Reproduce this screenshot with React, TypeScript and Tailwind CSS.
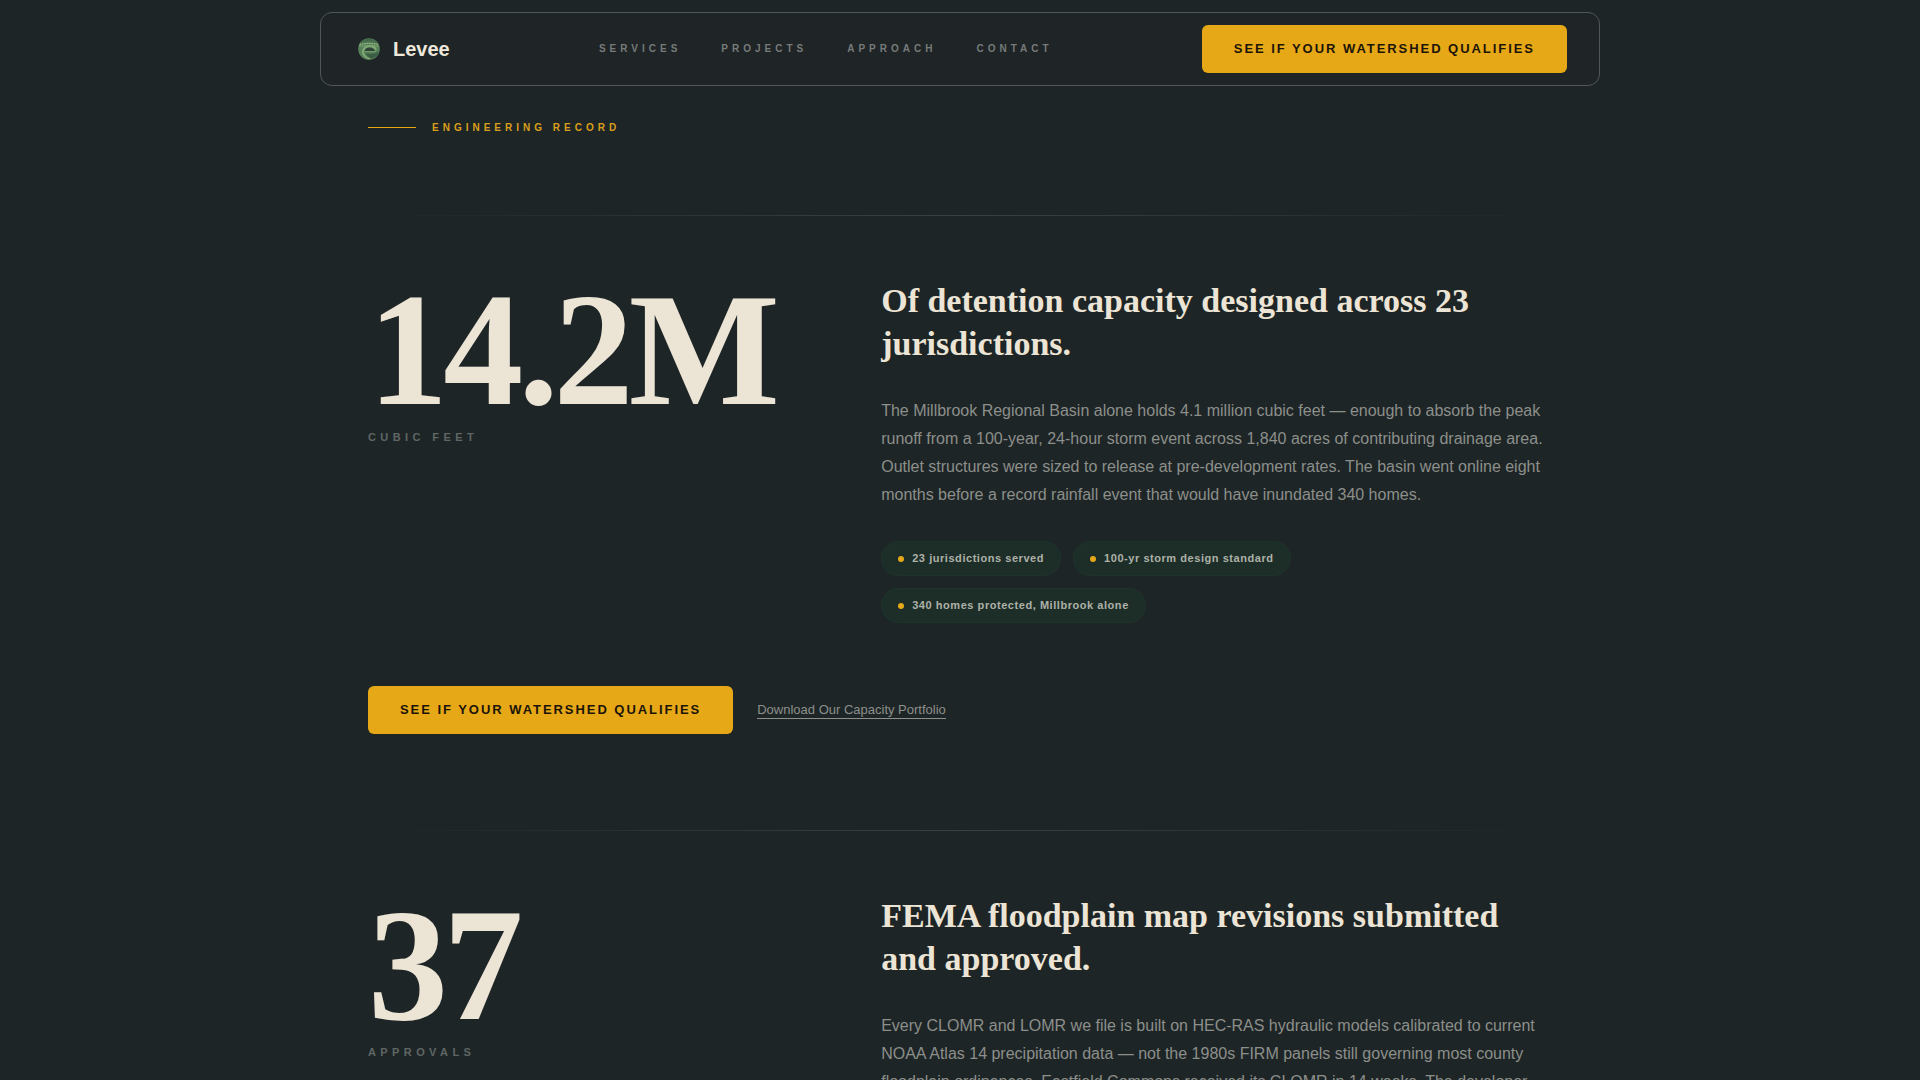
import type { ReactNode } from "react"

interface IRecord {
    value: string,
    unit: string,
    title: string,
    descr: string,
    facts: string[]
}

const navItems = ["Services", "Projects", "Approach", "Contact"]

const records: IRecord[] = [
    {
        value: "14.2M",
        unit: "Cubic feet",
        title: "Of detention capacity designed across 23 jurisdictions.",
        descr: "The Millbrook Regional Basin alone holds 4.1 million cubic feet — enough to absorb the peak runoff from a 100-year, 24-hour storm event across 1,840 acres of contributing drainage area. Outlet structures were sized to release at pre-development rates. The basin went online eight months before a record rainfall event that would have inundated 340 homes.",
        facts: ["23 jurisdictions served", "100-yr storm design standard", "340 homes protected, Millbrook alone"]
    },
    {
        value: "37",
        unit: "Approvals",
        title: "FEMA floodplain map revisions submitted and approved.",
        descr: "Every CLOMR and LOMR we file is built on HEC-RAS hydraulic models calibrated to current NOAA Atlas 14 precipitation data — not the 1980s FIRM panels still governing most county floodplain ordinances. Eastfield Commons received its CLOMR in 14 weeks. The developer",
        facts: []
    }
]

const Logo = () => (
    <svg viewBox="0 0 32 32" className="size-8" aria-hidden="true">
        <circle cx="16" cy="16" r="10.8" fill="#55805a" />
        <path d="M7 10.5a10.8 10.8 0 0 1 18 0c-6-1.6-12-1.6-18 0z" fill="#426848" />
        <path d="M9 9.300c4-1.200 10-1.200 14 0" fill="none" stroke="#5f8760" strokeWidth="0.8" strokeDasharray="1 1" />
        <path d="M6.500 11.500c5-1.400 14-1.400 19 0" fill="none" stroke="#9db789" strokeWidth="1.2" strokeDasharray="1.600 0.800" />
        <path d="M6 13.500c5-1 14-1.200 20 .2" fill="none" stroke="#6f9767" strokeWidth="1.4" />
        <path d="M23 17c-1-3-3.600-4-6.600-3.700-4.400.4-6.800 2.800-6.400 6 .4 3.400 3.400 6 7 6.200" fill="none" stroke="#82a875" strokeWidth="2" />
        <path d="M11.800 18c.4-2.400 2.400-3.400 4.800-3.400 2.600 0 4.600 1.200 5.200 3.400z" fill="#2f4437" />
        <path d="M12 18.500h11" stroke="#7c9f6f" strokeWidth="0.8" />
        <path d="M13 20c3 1.400 8 1 13-1.500-1 4-4 6.500-7.500 7-3-.8-5-2.800-5.500-5.500z" fill="#3b5d43" />
    </svg>
)

const QualifyButton = () => (
    <button type="button" className="h-12 shrink-0 rounded-md bg-[#e6a817] px-8 text-[13px] font-bold uppercase tracking-[0.15em] text-[#1c1409]">
        See if your watershed qualifies
    </button>
)

const Fact = ({ children }: { children: ReactNode }) => (
    <li className="flex items-center gap-2 rounded-full border border-[#1d342b] bg-[#1d2e29] px-4 py-2 text-[11px] leading-[17px] font-bold tracking-[0.05em] text-[#aeb1a7]">
        <span className="size-1.5 rounded-full bg-[#e6a817]" />
        {children}
    </li>
)

const Divider = () => (
    <div className="-mb-px h-px bg-linear-to-r from-transparent via-[#3a4142] to-transparent" />
)

const RecordItem = ({ value, unit, title, descr, facts }: IRecord) => (
    <section>
        <Divider />
        <div className="grid grid-cols-[2fr_3fr] gap-[66px] pt-16">
            <div>
                <p className="font-['Liberation_Serif',serif] text-[160px] leading-[142px] font-bold tracking-[-0.03em] text-[#ece4d5]">{value}</p>
                <p className="mt-2 text-[11px] leading-[17px] font-bold uppercase tracking-[0.4em] text-[#5f6664]">{unit}</p>
            </div>
            <div>
                <h2 className="font-['Liberation_Serif',serif] text-[34px] leading-[43px] font-bold text-[#ece4d5]">{title}</h2>
                <p className="mt-8 text-base leading-7 text-[#8c8f8a]">{descr}</p>
                {facts.length > 0 && (
                    <ul className="mt-8 flex max-w-[480px] flex-wrap gap-3">
                        {facts.map((fact) => <Fact key={fact}>{fact}</Fact>)}
                    </ul>
                )}
            </div>
        </div>
        <div className="flex items-center gap-6 pt-[63px] pb-24">
            <QualifyButton />
            <a href="#portfolio" className="border-b border-[#8c8f8a] text-[13px] leading-4 text-[#8c8f8a]">Download Our Capacity Portfolio</a>
        </div>
    </section>
)

export default function App() {
    return (
        <div className="h-screen overflow-hidden bg-[#1e2527] pt-3 font-['Liberation_Sans',Arial,sans-serif]">
            <header className="mx-auto flex max-w-7xl items-center justify-between rounded-xl border border-[#515758] bg-[#1f2426] px-8 py-3">
                <a href="#home" className="flex items-center gap-2 text-xl font-bold text-[#eee8dc]">
                    <Logo />
                    Levee
                </a>
                <nav className="flex gap-10">
                    {navItems.map((item) => (
                        <a key={item} href={`#${item.toLowerCase()}`} className="text-[10px] leading-4 font-bold uppercase tracking-[0.4em] text-[#767b7a]">{item}</a>
                    ))}
                </nav>
                <QualifyButton />
            </header>

            <main className="mx-auto max-w-7xl px-12 pt-8">
                <div className="flex items-center gap-4 pb-[78px]">
                    <span className="h-px w-12 bg-[#e6a817]" />
                    <h1 className="text-[10px] leading-[19px] font-bold uppercase tracking-[0.4em] text-[#d99f1b]">Engineering record</h1>
                </div>
                {records.map((record) => <RecordItem key={record.value} {...record} />)}
            </main>
        </div>
    )
}
